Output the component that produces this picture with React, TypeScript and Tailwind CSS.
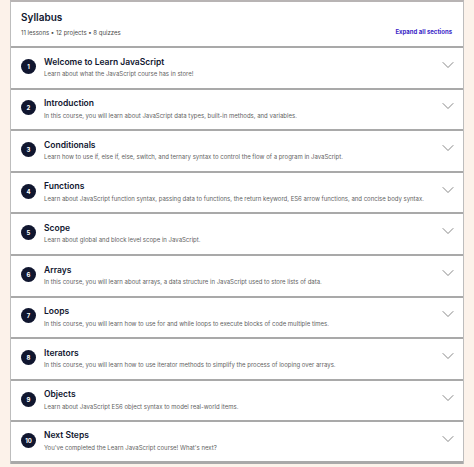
import React from "react";

const rows = [
  ["Welcome to Learn JavaScript", "Learn about what the JavaScript course has in store!"],
  ["Introduction", "In this course, you will learn about JavaScript data types, built-in methods, and variables."],
  ["Conditionals", "Learn how to use if, else if, else, switch, and ternary syntax to control the flow of a program in JavaScript."],
  ["Functions", "Learn about JavaScript function syntax, passing data to functions, the return keyword, ES6 arrow functions, and concise body syntax."],
  ["Scope", "Learn about global and block level scope in JavaScript."],
  ["Arrays", "In this course, you will learn about arrays, a data structure in JavaScript used to store lists of data."],
  ["Loops", "In this course, you will learn how to use for and while loops to execute blocks of code multiple times."],
  ["Iterators", "In this course, you will learn how to use iterator methods to simplify the process of looping over arrays."],
  ["Objects", "Learn about JavaScript ES6 object syntax to model real-world items."],
  ["Next Steps", "You've completed the Learn JavaScript course! What's next?"],
];

function Chevron() {
  return (
    <svg width="12" height="8" viewBox="0 0 12 8" fill="none">
      <path d="M1 1.5 L6 6.5 L11 1.5" stroke="#7a7a7a" strokeWidth="0.9" strokeLinecap="round" strokeLinejoin="round" />
    </svg>
  );
}

export default function App() {
  return (
    <div className="w-[474px] h-[467px] bg-[#fcf2ea] overflow-hidden" style={{ fontFamily: "Inter, 'Noto Sans', sans-serif" }}>
      <div className="ml-[10px] w-[454px] bg-white border-x border-[#bdbdbd] border-t-2 border-t-[#b8b4b4]">
        <div className="h-[46px] px-[10px] flex items-end justify-between pb-[10px] border-b-2 border-[#a9a9a9]">
          <div className="flex flex-col">
            <div className="text-[10px] font-semibold text-[#10162f] leading-none mb-[1px]">Syllabus</div>
            <div className="text-[6px] text-[#4b4b4b] leading-none mt-[7px]">11 lessons • 12 projects • 8 quizzes</div>
          </div>
          <div className="text-[6px] font-bold text-[#3a1fc7] leading-none mb-[1px] mr-[1px]">Expand all sections</div>
        </div>
        {rows.map(([t, d], i) => (
          <div key={i} className="h-[41.6px] flex items-center border-b-2 border-[#a9a9a9] last:border-b-[3px] pl-[10px] pr-[10px]">
            <div className="w-[15px] h-[15px] mt-[-3px] rounded-full bg-[#10162f] text-white text-[6px] font-bold flex items-center justify-center shrink-0">{i + 1}</div>
            <div className="ml-[8px] flex-1 flex flex-col mt-[-1px]">
              <div className="text-[8.5px] font-semibold text-[#10162f] leading-none">{t}</div>
              <div className="text-[6px] text-[#5f5f5f] leading-none mt-[5px] whitespace-nowrap">{d}</div>
            </div>
            <div className="mt-[-6px] mr-[-1px]"><Chevron /></div>
          </div>
        ))}
      </div>
    </div>
  );
}
